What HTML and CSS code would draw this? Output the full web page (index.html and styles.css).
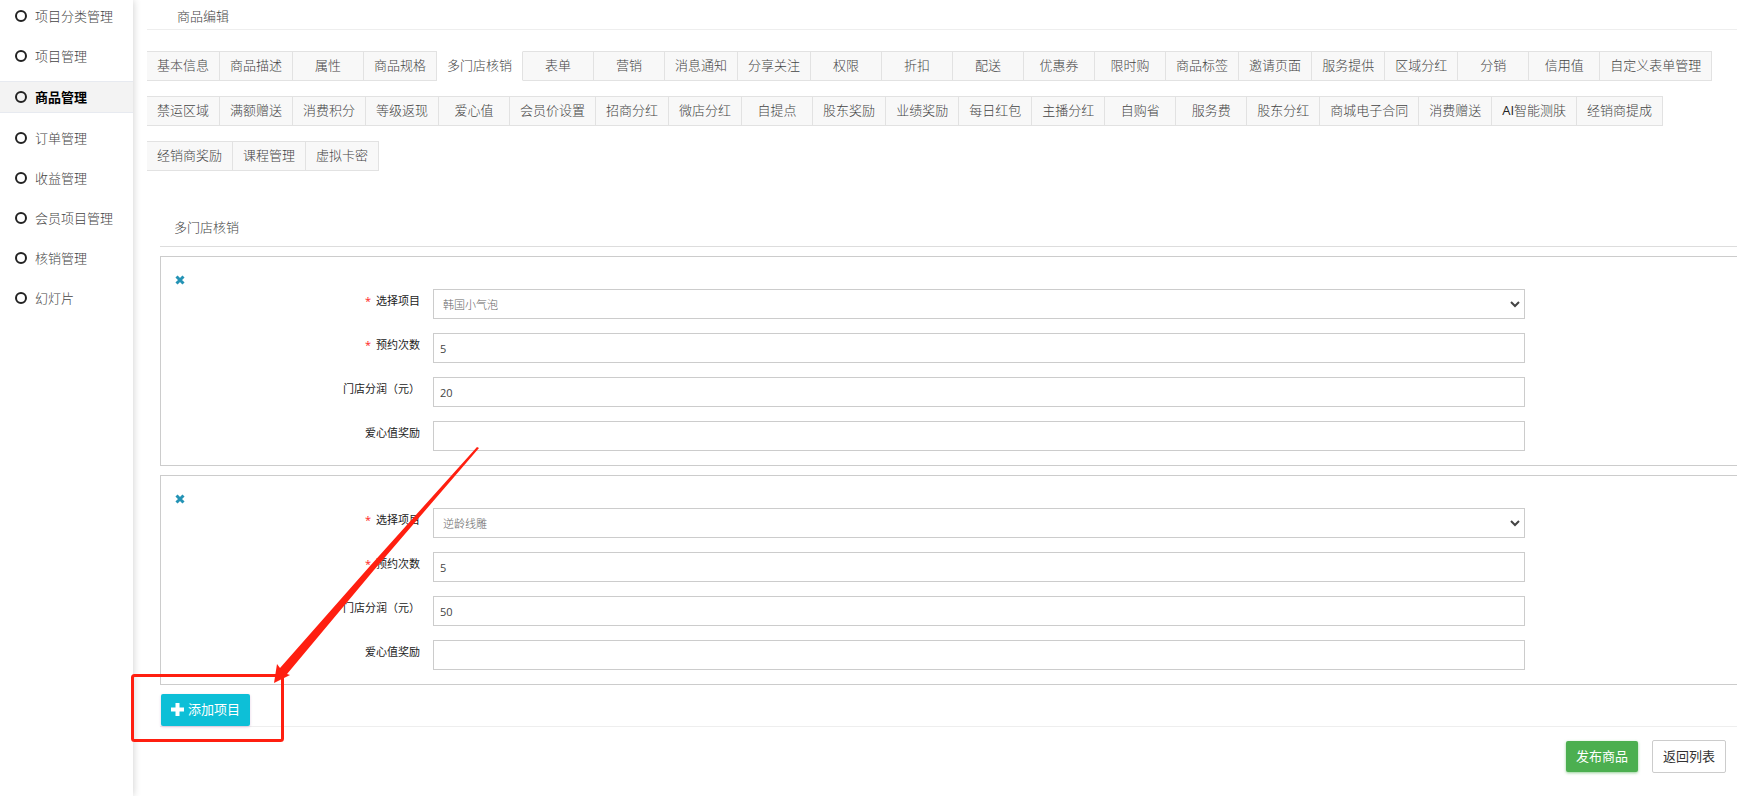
FILE: index.html
```html
<!DOCTYPE html>
<html lang="zh-CN">
<head>
    <meta charset="UTF-8">
    <meta name="viewport" content="width=device-width, initial-scale=1.0">
    <title>商品编辑</title>
    <link rel="stylesheet" href="styles.css">
</head>
<body>
    <nav class="sidebar">
        <a href="#" class="menu-item"><span class="dot"></span>项目分类管理</a>
        <a href="#" class="menu-item"><span class="dot"></span>项目管理</a>
        <a href="#" class="menu-item active"><span class="dot"></span>商品管理</a>
        <a href="#" class="menu-item"><span class="dot"></span>订单管理</a>
        <a href="#" class="menu-item"><span class="dot"></span>收益管理</a>
        <a href="#" class="menu-item"><span class="dot"></span>会员项目管理</a>
        <a href="#" class="menu-item"><span class="dot"></span>核销管理</a>
        <a href="#" class="menu-item"><span class="dot"></span>幻灯片</a>
    </nav>

    <main class="main">
        <h1 class="page-title">商品编辑</h1>

        <div class="tabs">
            <a href="#" class="tab">基本信息</a>
            <a href="#" class="tab">商品描述</a>
            <a href="#" class="tab">属性</a>
            <a href="#" class="tab">商品规格</a>
            <a href="#" class="tab active">多门店核销</a>
            <a href="#" class="tab">表单</a>
            <a href="#" class="tab">营销</a>
            <a href="#" class="tab">消息通知</a>
            <a href="#" class="tab">分享关注</a>
            <a href="#" class="tab">权限</a>
            <a href="#" class="tab">折扣</a>
            <a href="#" class="tab">配送</a>
            <a href="#" class="tab">优惠券</a>
            <a href="#" class="tab">限时购</a>
            <a href="#" class="tab">商品标签</a>
            <a href="#" class="tab">邀请页面</a>
            <a href="#" class="tab">服务提供</a>
            <a href="#" class="tab">区域分红</a>
            <a href="#" class="tab">分销</a>
            <a href="#" class="tab">信用值</a>
            <a href="#" class="tab">自定义表单管理</a>
            <a href="#" class="tab">禁运区域</a>
            <a href="#" class="tab">满额赠送</a>
            <a href="#" class="tab">消费积分</a>
            <a href="#" class="tab">等级返现</a>
            <a href="#" class="tab">爱心值</a>
            <a href="#" class="tab">会员价设置</a>
            <a href="#" class="tab">招商分红</a>
            <a href="#" class="tab">微店分红</a>
            <a href="#" class="tab">自提点</a>
            <a href="#" class="tab">股东奖励</a>
            <a href="#" class="tab">业绩奖励</a>
            <a href="#" class="tab">每日红包</a>
            <a href="#" class="tab">主播分红</a>
            <a href="#" class="tab">自购省</a>
            <a href="#" class="tab">服务费</a>
            <a href="#" class="tab">股东分红</a>
            <a href="#" class="tab">商城电子合同</a>
            <a href="#" class="tab">消费赠送</a>
            <a href="#" class="tab"><span class="latin">AI</span>智能测肤</a>
            <a href="#" class="tab">经销商提成</a>
            <a href="#" class="tab">经销商奖励</a>
            <a href="#" class="tab">课程管理</a>
            <a href="#" class="tab">虚拟卡密</a>
        </div>

        <form class="form">
            <h2 class="section-title">多门店核销</h2>

            <div class="project">
                <button type="button" class="remove" aria-label="删除">
                    <svg width="10" height="10" viewBox="0 0 10 10"><path d="M1.500 1.500l7 7M8.500 1.500l-7 7"/></svg>
                </button>
                <div class="row">
                    <label for="project1"><span class="required">*</span>选择项目</label>
                    <div class="select-box">
                        <select id="project1">
                            <option>韩国小气泡</option>
                        </select>
                        <svg class="chevron" width="10" height="8" viewBox="0 0 10 8"><path d="M1 2l4 4 4-4"/></svg>
                    </div>
                </div>
                <div class="row">
                    <label for="times1"><span class="required">*</span>预约次数</label>
                    <input type="text" id="times1" value="5">
                </div>
                <div class="row">
                    <label for="profit1">门店分润（元）</label>
                    <input type="text" id="profit1" value="20">
                </div>
                <div class="row">
                    <label for="love1">爱心值奖励</label>
                    <input type="text" id="love1">
                </div>
            </div>

            <div class="project">
                <button type="button" class="remove" aria-label="删除">
                    <svg width="10" height="10" viewBox="0 0 10 10"><path d="M1.500 1.500l7 7M8.500 1.500l-7 7"/></svg>
                </button>
                <div class="row">
                    <label for="project2"><span class="required">*</span>选择项目</label>
                    <div class="select-box">
                        <select id="project2">
                            <option>逆龄线雕</option>
                        </select>
                        <svg class="chevron" width="10" height="8" viewBox="0 0 10 8"><path d="M1 2l4 4 4-4"/></svg>
                    </div>
                </div>
                <div class="row">
                    <label for="times2"><span class="required">*</span>预约次数</label>
                    <input type="text" id="times2" value="5">
                </div>
                <div class="row">
                    <label for="profit2">门店分润（元）</label>
                    <input type="text" id="profit2" value="50">
                </div>
                <div class="row">
                    <label for="love2">爱心值奖励</label>
                    <input type="text" id="love2">
                </div>
            </div>

            <div class="add-bar">
                <button type="button" class="btn btn-add">
                    <svg width="13" height="13" viewBox="0 0 13 13"><path d="M6.500 0v13M0 6.500h13"/></svg>
                    添加项目
                </button>
            </div>

            <div class="actions">
                <button type="submit" class="btn btn-publish">发布商品</button>
                <button type="button" class="btn btn-back">返回列表</button>
            </div>
        </form>
    </main>

    <!-- red box and arrow pointing at the add button -->
    <svg class="callout" width="360" height="300" viewBox="0 0 360 300">
        <rect x="2.500" y="232.500" width="150" height="65" rx="2"/>
        <path d="M349 5L347 4L240 123L150 225L147 221L144 240L160 232L157 231L244 127Z"/>
    </svg>
</body>
</html>
```
FILE: styles.css
```css
* {
    box-sizing: border-box;
}

body {
    display: flex;
    height: 100vh;
    margin: 0;
    overflow: hidden;
    background: #fff;
    color: #444;
    font-family: "Open Sans", "Noto Sans CJK SC", sans-serif;
    font-size: 13px;
    font-weight: 300;
    line-height: 20px;
}

a {
    color: inherit;
    text-decoration: none;
}

button,
input,
select {
    font-family: inherit;
    font-weight: inherit;
}

/* sidebar */
.sidebar {
    display: flex;
    flex-direction: column;
    gap: 10px;
    flex: none;
    width: 133px;
    padding-top: 1px;
    box-shadow: 0 0 8px rgba(0, 0, 0, 0.2);
}

.menu-item {
    display: flex;
    align-items: center;
    gap: 8px;
    height: 30px;
    padding-left: 15px;
}

.menu-item.active {
    height: 32px;
    border-top: 1px solid #e7eaf0;
    border-bottom: 1px solid #e7eaf0;
    background: #f3f3f3;
    color: #000;
    font-weight: 700;
}

.dot {
    width: 12px;
    height: 12px;
    border: 2px solid #222;
    border-radius: 50%;
}

/* main */
.main {
    flex: 1;
    min-width: 0;
    padding-left: 14px;
}

.page-title {
    margin: 0;
    padding: 6px 30px 3px;
    border-bottom: 1px solid #eee;
    font-size: 13px;
    font-weight: 300;
}

.tabs {
    display: flex;
    flex-wrap: wrap;
    gap: 15px 0;
    margin-top: 21px;
}

.tab {
    min-width: 71px;
    height: 30px;
    padding: 3px 10px;
    border: 1px solid #e2e2e2;
    border-left: 0;
    background: #f8f8f8;
    text-align: center;
}

.tab.active {
    border-color: #fff #e2e2e2 #fff #fff;
    background: #fff;
}

.latin {
    color: #222;
    font-weight: 400;
}

/* form */
.form {
    padding: 46px 0 0 13px;
}

.section-title {
    margin: 0 0 9px;
    padding: 0 14px 9px;
    border-bottom: 1px solid #ddd;
    font-size: 13px;
    font-weight: 300;
}

.project {
    position: relative;
    display: flex;
    flex-direction: column;
    gap: 14px;
    margin-bottom: 9px;
    padding: 32px 212px 14px 0;
    border: 1px solid #ccc;
    border-right: 0;
}

.remove {
    position: absolute;
    top: 18px;
    left: 14px;
    display: flex;
    padding: 0;
    border: 0;
    background: none;
    cursor: pointer;
}

.remove path {
    stroke: #2493b5;
    stroke-width: 3;
}

.row {
    display: grid;
    grid-template-columns: 259px 1fr;
    column-gap: 13px;
}

.row label {
    color: #222;
    font-size: 11px;
    font-weight: 400;
    line-height: 24px;
    text-align: right;
}

.required {
    margin-right: 5px;
    color: #f22;
}

.row input,
.row select {
    width: 100%;
    height: 30px;
    padding: 0 6px;
    border: 1px solid #ccc;
    border-radius: 0;
    background: #fff;
    color: #444;
    font-size: 11px;
    font-weight: 400;
}

.row select {
    display: block;
    padding: 0 9px;
    color: #666;
    font-weight: 300;
    appearance: none;
}

.select-box {
    position: relative;
}

.chevron {
    position: absolute;
    top: 11px;
    right: 5px;
    fill: none;
    stroke: #444;
    stroke-width: 2;
    pointer-events: none;
}

/* buttons */
.btn {
    border: 0;
    border-radius: 2px;
    font-size: 13px;
    font-weight: 400;
    line-height: 20px;
    cursor: pointer;
}

.add-bar {
    border-bottom: 1px solid #eee;
}

.btn-add {
    display: flex;
    align-items: center;
    gap: 4px;
    height: 32px;
    margin-left: 1px;
    padding: 0 10px 2px;
    background: #0dbfd7;
    color: #fff;
    box-shadow: 0 1px 3px rgba(120, 0, 120, 0.2);
}

.btn-add path {
    stroke: #fff;
    stroke-width: 4;
}

.actions {
    display: flex;
    align-items: center;
    justify-content: flex-end;
    gap: 14px;
    padding: 13px 11px;
}

.btn-publish {
    height: 31px;
    padding: 0 10px 2px;
    background: #4caf50;
    color: #fff;
    box-shadow: 0 1px 3px rgba(76, 175, 80, 0.6);
}

.btn-back {
    height: 33px;
    padding: 0 10px 2px;
    border: 1px solid #ccc;
    background: #fff;
    color: #333;
}

.callout {
    position: absolute;
    top: 443px;
    left: 130px;
    fill: #ff1f10;
    pointer-events: none;
}

.callout rect {
    fill: none;
    stroke: #ff1f10;
    stroke-width: 3;
}
```
